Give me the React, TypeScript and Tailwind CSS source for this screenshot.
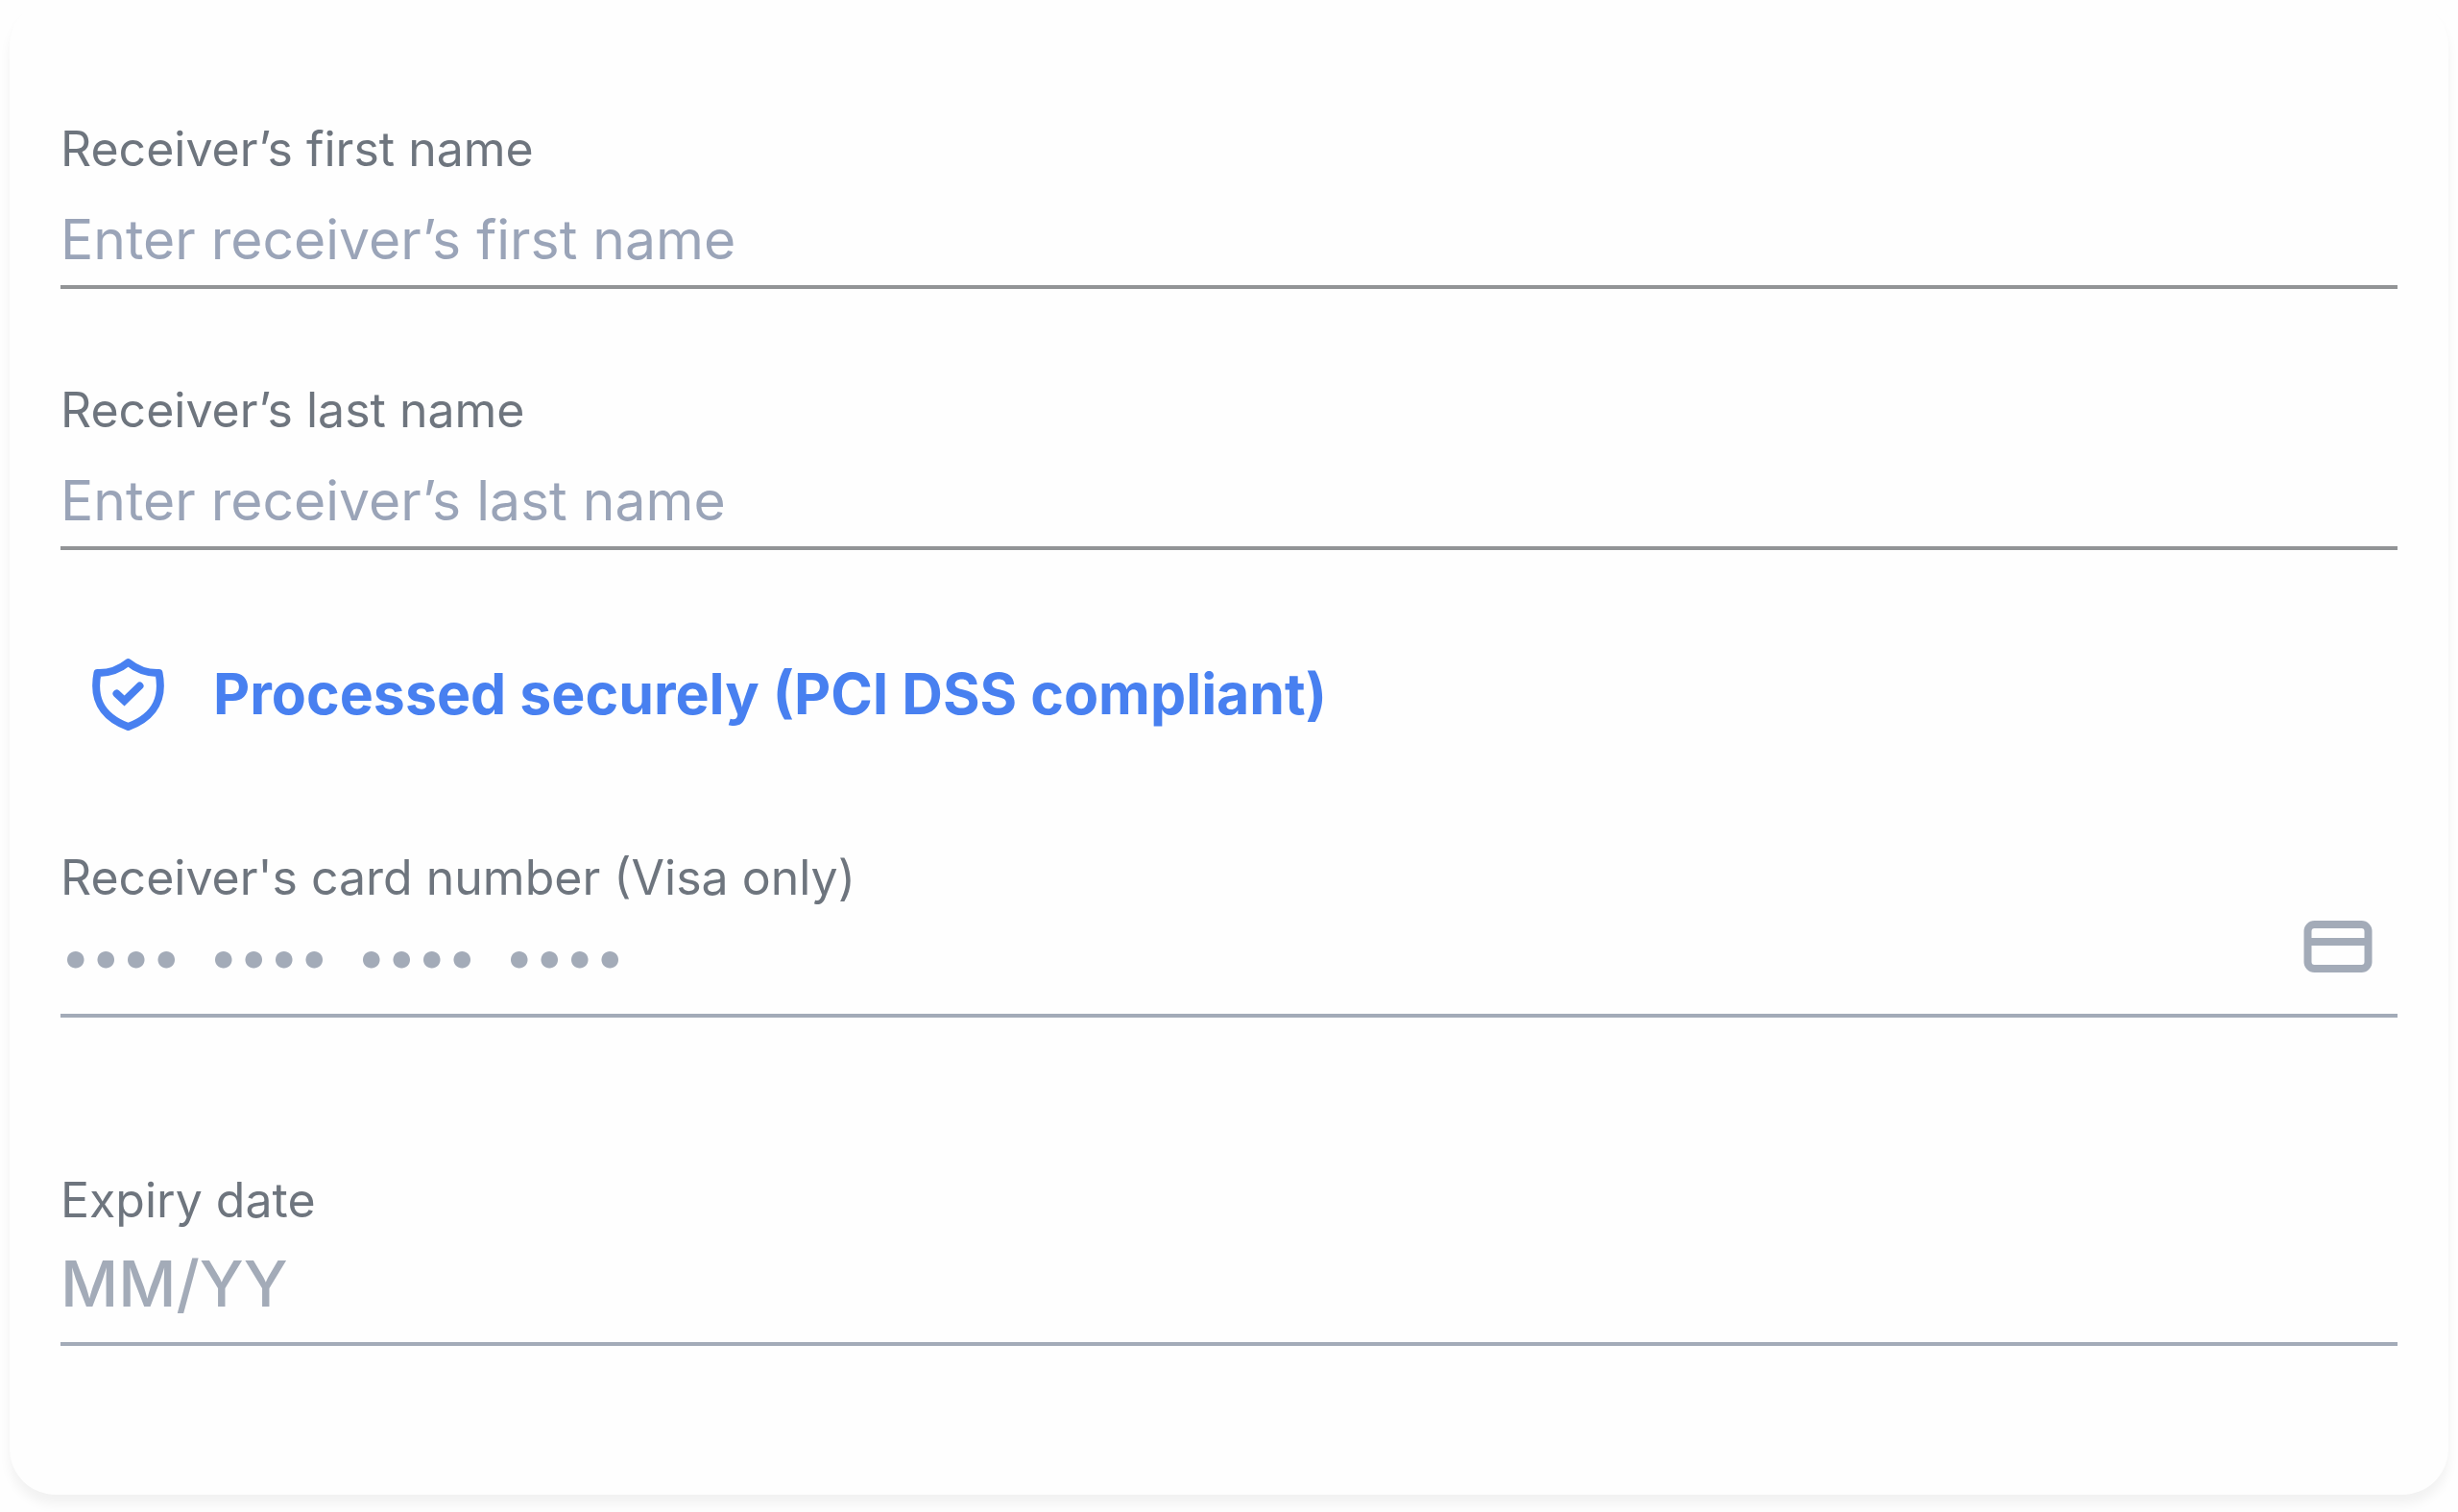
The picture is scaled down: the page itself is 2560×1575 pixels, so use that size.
import React, { useState } from 'react';

interface FieldProps {
  id: string;
  label: string;
  placeholder: string;
  className?: string;
  inputClassName: string;
  lineClassName: string;
  icon?: React.ReactNode;
}

const Field: React.FC<FieldProps> = ({ id, label, placeholder, className = '', inputClassName, lineClassName, icon }) => {
  const [value, setValue] = useState('');

  return (
    <div className={`flex flex-col ${className}`}>
      <label htmlFor={id} className="text-[50px] leading-[60px] text-[#6e757e]">
        {label}
      </label>
      <div className={`flex items-center border-b-4 ${lineClassName}`}>
        <input
          id={id}
          type="text"
          value={value}
          onChange={e => setValue(e.target.value)}
          placeholder={placeholder}
          className={`min-w-0 flex-1 bg-transparent outline-none ${inputClassName}`}
        />
        {icon}
      </div>
    </div>
  );
};

const ShieldIcon = () => (
  <svg viewBox="0 0 76 76" className="h-19 w-19 shrink-0" fill="none" stroke="currentColor" strokeWidth="8" aria-hidden="true">
    <path d="M37.500 5C30 11 19 16.500 5.500 16C1 39 6 60 37.500 72C69 60 74 39 69.500 16C56 16.500 45 11 37.500 5Z" strokeLinejoin="round" />
    <path d="M25.500 37.500L33.500 45L49.500 29.500" strokeLinecap="round" />
  </svg>
);

const CardIcon = () => (
  <div className="shrink-0 pr-[26px] pb-7 text-[#a3abb8]">
    <svg viewBox="0 0 72 56" className="h-14 w-18" fill="none" stroke="currentColor" strokeWidth="8" aria-hidden="true">
      <rect x="4.500" y="5" width="63" height="46" rx="7" />
      <path d="M4 23H68" />
    </svg>
  </div>
);

const App: React.FC = () => {
  return (
    <main className="bg-[#fefefe] px-[10px] pb-5 font-[Inter,sans-serif]">
      <form className="flex flex-col rounded-[48px] bg-[#fefefe] px-[53px] pt-[125px] pb-[155px] shadow-[0_10px_12px_rgba(0,0,0,0.05)]">
        <Field
          id="first-name"
          label="Receiver’s first name"
          placeholder="Enter receiver’s first name"
          inputClassName="h-28 pt-4 text-[57px] placeholder:text-[#9aa4b8]"
          lineClassName="border-[#929496]"
        />
        <Field
          id="last-name"
          label="Receiver’s last name"
          placeholder="Enter receiver’s last name"
          className="mt-24"
          inputClassName="h-28 pt-4 text-[57px] placeholder:text-[#9aa4b8]"
          lineClassName="border-[#929496]"
        />

        <div className="mt-28 flex items-center gap-[50px] px-[33px] text-[#4880f0]">
          <ShieldIcon />
          <p className="text-[59px] leading-[76px] font-bold">Processed securely (PCI DSS compliant)</p>
        </div>

        <Field
          id="card-number"
          label="Receiver's card number (Visa only)"
          placeholder={'••••\u2002••••\u2002••••\u2002••••'}
          className="mt-[123px]"
          inputClassName="h-28 pb-2 text-[56px] placeholder:text-[#a3abb8]"
          lineClassName="border-[#a3abb8]"
          icon={<CardIcon />}
        />
        <Field
          id="expiry"
          label="Expiry date"
          placeholder="MM/YY"
          className="mt-40"
          inputClassName="h-[118px] pb-1 text-[66px] font-medium placeholder:text-[#a3abb8]"
          lineClassName="border-[#a3abb8]"
        />
      </form>
    </main>
  );
};

export default App;
